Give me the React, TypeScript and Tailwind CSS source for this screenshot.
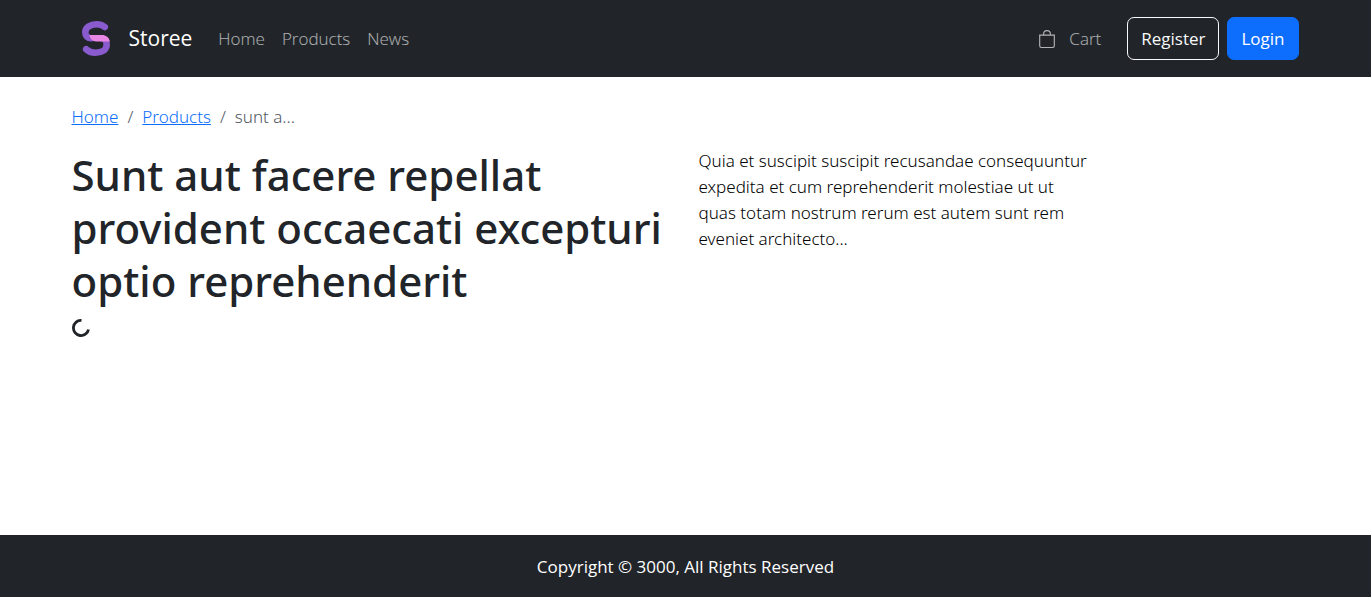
const navLinks = ["Home", "Products", "News"];

function Logo() {
  return (
    <svg viewBox="0 0 28 35" className="h-[35px] w-7" fill="none" aria-hidden="true">
      <path d="M22.800 6C20.500 4.200 17.800 3.300 14.500 3.300C8.200 3.300 3.300 6.500 3.300 11.200C3.300 14.800 5.500 17.300 9.500 17.300" stroke="#8a5bce" strokeWidth="6.600" strokeLinecap="round" />
      <path d="M4.200 28.200C6.500 30.600 9.800 31.700 13.500 31.700C19.800 31.700 24.700 28.800 24.700 23.500C24.700 20.500 23 17.500 20 17.300" stroke="#8a5bce" strokeWidth="6.600" strokeLinecap="round" />
      <path d="M7.300 14.100H19.500C24 14.100 27 16.500 27.900 20.400H14C10 20.400 8 17.500 7.300 14.100Z" fill="#e887e3" />
    </svg>
  );
}

function BagIcon() {
  return (
    <svg viewBox="0 0 16 16" className="size-[18px]" fill="currentColor" aria-hidden="true">
      <path d="M8 1a2.500 2.500 0 0 1 2.500 2.500V4h-5v-.5A2.500 2.500 0 0 1 8 1m3.500 3v-.5a3.500 3.500 0 1 0-7 0V4H1v10a2 2 0 0 0 2 2h10a2 2 0 0 0 2-2V4zM2 5h12v9a1 1 0 0 1-1 1H3a1 1 0 0 1-1-1z" />
    </svg>
  );
}

function Spinner() {
  return (
    <svg viewBox="0 0 18 18" className="size-[18px]" fill="none" role="status" aria-label="Loading">
      <path d="M9.500 1.400A7.600 7.600 0 1 0 16.500 10.400" stroke="#212529" strokeWidth="2.800" />
    </svg>
  );
}

export default function App() {
  return (
    <div className="flex min-h-screen flex-col bg-white font-['Open_Sans','Noto_Sans',sans-serif] text-[17px] leading-[27px] text-[#212529]">
      <header className="bg-[#212529] py-[17px]">
        <nav className="mx-auto flex max-w-[1254px] items-center pr-[14px] pl-[13px]">
          <a href="#" className="mr-[26px] flex items-center gap-[19px] pl-[10px] text-[21px] text-white">
            <Logo />
            Storee
          </a>
          <ul className="flex gap-[17px] font-light text-white/65">
            {navLinks.map((label) => (
              <li key={label}>
                <a href="#">{label}</a>
              </li>
            ))}
          </ul>
          <a href="#" className="ml-auto flex items-center gap-[13px] font-light text-white/65">
            <BagIcon />
            Cart
          </a>
          <button type="button" className="ml-[26px] rounded-[7px] border border-[#f8f9fa] px-[13px] py-[7px] text-[#f8f9fa]">
            Register
          </button>
          <button type="button" className="ml-2 rounded-[7px] border border-[#0d6efd] bg-[#0d6efd] px-[13px] py-[7px] text-white">
            Login
          </button>
        </nav>
      </header>

      <main className="mx-auto w-full max-w-[1254px] grow px-[13px] pt-[26px]">
        <nav aria-label="breadcrumb" className="mb-[18px]">
          <ol className="flex gap-[9px] font-['Noto_Sans','Open_Sans',sans-serif] font-light text-[#50575e]">
            <li>
              <a href="#" className="text-[#0d6efd] underline">Home</a>
            </li>
            <li aria-hidden="true">/</li>
            <li>
              <a href="#" className="text-[#0d6efd] underline">Products</a>
            </li>
            <li aria-hidden="true">/</li>
            <li aria-current="page">sunt a...</li>
          </ol>
        </nav>
        <div className="grid grid-cols-12 gap-x-[26px]">
          <div className="col-span-6">
            <h1 className="mb-3 font-['Noto_Sans','Open_Sans',sans-serif] text-[42px] leading-[53px] font-medium">
              Sunt aut facere repellat provident occaecati excepturi optio reprehenderit
            </h1>
            <Spinner />
          </div>
          <p className="col-span-4 font-['Noto_Sans','Open_Sans',sans-serif] leading-[26px] font-light text-black">
            Quia et suscipit suscipit recusandae consequuntur expedita et cum reprehenderit molestiae ut ut quas totam nostrum rerum est autem sunt rem eveniet architecto...
          </p>
        </div>
      </main>

      <footer className="bg-[#212529] pt-[18px] pb-[17px] text-center text-white">
        Copyright © 3000, All Rights Reserved
      </footer>
    </div>
  );
}
